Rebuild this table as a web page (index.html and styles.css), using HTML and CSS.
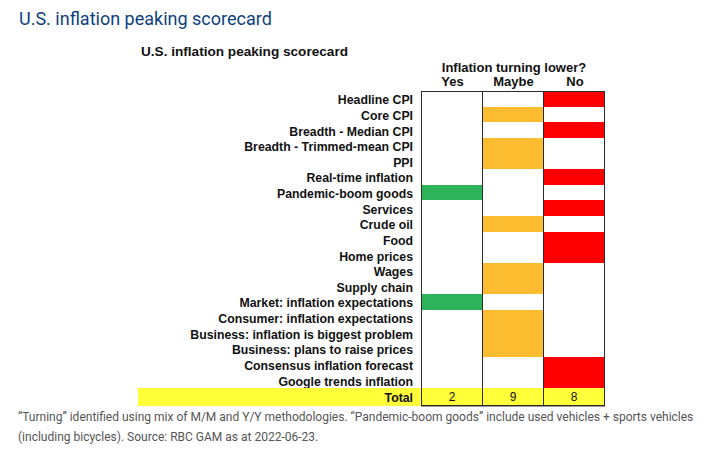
FILE: index.html
```html
<!DOCTYPE html>
<html lang="en">
<head>
<meta charset="utf-8">
<title>U.S. inflation peaking scorecard</title>
<link rel="stylesheet" href="styles.css">
</head>
<body>
<h1 class="title">U.S. inflation peaking scorecard</h1>
<div class="chart">
  <div class="chart-title">U.S. inflation peaking scorecard</div>
  <div class="head">
    <div class="spacer"></div>
    <div class="head-cols">
      <div class="question">Inflation turning lower?</div>
      <div class="opts"><span>Yes</span><span>Maybe</span><span>No</span></div>
    </div>
  </div>
  <div class="grid">
    <div class="lab">Headline CPI</div><div class="c first"></div><div class="c first"></div><div class="c first last red"></div>
    <div class="lab">Core CPI</div><div class="c"></div><div class="c org"></div><div class="c last"></div>
    <div class="lab">Breadth - Median CPI</div><div class="c"></div><div class="c"></div><div class="c last red"></div>
    <div class="lab">Breadth - Trimmed-mean CPI</div><div class="c"></div><div class="c org"></div><div class="c last"></div>
    <div class="lab">PPI</div><div class="c"></div><div class="c org"></div><div class="c last"></div>
    <div class="lab">Real-time inflation</div><div class="c"></div><div class="c"></div><div class="c last red"></div>
    <div class="lab">Pandemic-boom goods</div><div class="c grn"></div><div class="c"></div><div class="c last"></div>
    <div class="lab">Services</div><div class="c"></div><div class="c"></div><div class="c last red"></div>
    <div class="lab">Crude oil</div><div class="c"></div><div class="c org"></div><div class="c last"></div>
    <div class="lab">Food</div><div class="c"></div><div class="c"></div><div class="c last red"></div>
    <div class="lab">Home prices</div><div class="c"></div><div class="c"></div><div class="c last red"></div>
    <div class="lab">Wages</div><div class="c"></div><div class="c org"></div><div class="c last"></div>
    <div class="lab">Supply chain</div><div class="c"></div><div class="c org"></div><div class="c last"></div>
    <div class="lab">Market: inflation expectations</div><div class="c grn"></div><div class="c"></div><div class="c last"></div>
    <div class="lab">Consumer: inflation expectations</div><div class="c"></div><div class="c org"></div><div class="c last"></div>
    <div class="lab">Business: inflation is biggest problem</div><div class="c"></div><div class="c org"></div><div class="c last"></div>
    <div class="lab">Business: plans to raise prices</div><div class="c"></div><div class="c org"></div><div class="c last"></div>
    <div class="lab">Consensus inflation forecast</div><div class="c"></div><div class="c"></div><div class="c last red"></div>
    <div class="lab">Google trends inflation</div><div class="c"></div><div class="c"></div><div class="c last red"></div>
    <div class="lab total">Total</div><div class="c total num">2</div><div class="c total num">9</div><div class="c total num last">8</div>
  </div>
</div>
<p class="note">“Turning” identified using mix of M/M and Y/Y methodologies. “Pandemic-boom goods” include used vehicles + sports vehicles (including bicycles). Source: RBC GAM as at 2022-06-23.</p>
</body>
</html>
```
FILE: styles.css
```css
html, body {
  margin: 0;
  padding: 0;
  background: #ffffff;
}

.title {
  margin: 0;
  padding: 8px 0 0 19px;
  font-family: Roboto, "Liberation Sans", sans-serif;
  font-weight: 400;
  font-size: 18px;
  line-height: 21px;
  color: #0d3f7e;
}

.chart {
  margin: 15px 0 0 138px;
  width: 467px;
  font-family: "Liberation Sans", Arial, sans-serif;
  color: #111;
}

.chart-title {
  padding-left: 3px;
  font-weight: 700;
  font-size: 13.6px;
  line-height: 15px;
  height: 15px;
}

.head {
  display: flex;
  margin-top: 2px;
}

.spacer {
  width: 283px;
  flex: none;
}

.head-cols {
  width: 184px;
  font-weight: 700;
  font-size: 13px;
  line-height: 14px;
}

.question {
  text-align: center;
  padding-left: 2px;
}

.opts {
  display: grid;
  grid-template-columns: 61px 61px 62px;
  text-align: center;
}

.opts span {
  padding-left: 2px;
}

.grid {
  display: grid;
  grid-template-columns: 283px 61px 61px 62px;
  grid-template-rows: repeat(19, 15.63px) 17.7px;
  margin-top: 2px;
}

.lab {
  display: flex;
  align-items: center;
  justify-content: flex-end;
  padding: 3px 8px 0 0;
  font-weight: 700;
  font-size: 12.3px;
  line-height: 12px;
  white-space: nowrap;
}

.c {
  border-left: 1px solid #2a2a2a;
  background: #ffffff;
}

.c.first {
  border-top: 1px solid #2a2a2a;
}

.c.last {
  border-right: 1px solid #2a2a2a;
}

.red { background: #ff0000; }
.org { background: #fcbc30; }
.grn { background: #2db35a; }

.total {
  background: #ffff3a;
}

.c.total {
  border-bottom: 1px solid #2a2a2a;
  box-shadow: 0 1px 0 #9a9a9a;
}

.num {
  display: flex;
  align-items: center;
  justify-content: center;
  padding-top: 2px;
  font-size: 12px;
  line-height: 12px;
}

.note {
  margin: 1px 0 0 0;
  padding: 0 2px 0 18px;
  font-family: Roboto, "Liberation Sans", sans-serif;
  font-size: 12px;
  line-height: 20px;
  color: #555555;
}
```
